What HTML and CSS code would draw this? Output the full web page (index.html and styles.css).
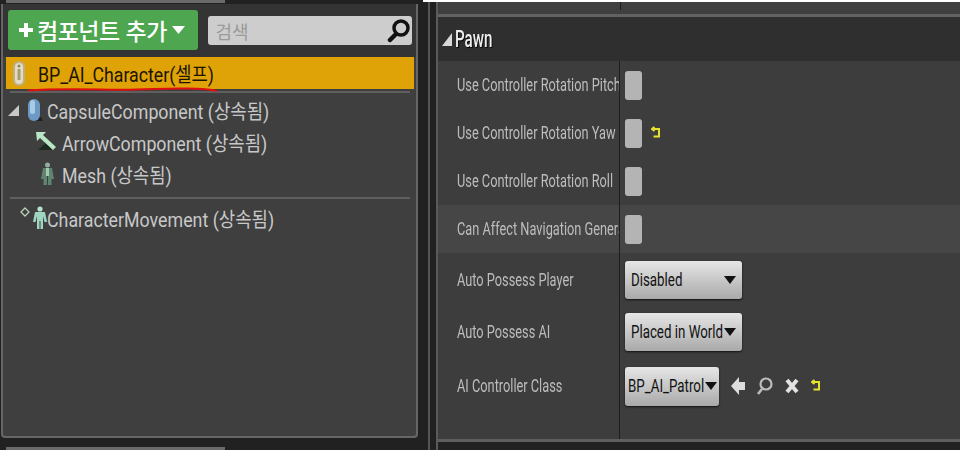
FILE: index.html
```html
<!DOCTYPE html>
<html lang="ko">
<head>
<meta charset="utf-8">
<title>BP_AI_Character</title>
<link rel="stylesheet" href="styles.css">
</head>
<body>
<div class="page">
  <section class="left">
    <div class="tab-strip"><div class="tab"></div></div>
    <div class="panel">
      <div class="toolbar">
        <button class="add">
          <svg class="plus" width="16" height="16" viewBox="0 0 16 16"><path d="M6 1h4v5h5v4h-5v5H6v-5H1V6h5z" fill="#fff"/></svg>
          <span>컴포넌트 추가</span>
          <svg class="caret" width="13" height="8" viewBox="0 0 13 8"><path d="M0 0h13L6.500 8z" fill="#fff"/></svg>
        </button>
        <div class="search">
          <span>검색</span>
          <svg width="24" height="26" viewBox="0 0 24 26"><circle cx="14" cy="10" r="7" fill="none" stroke="#111" stroke-width="3.500"/><path d="M8 17l-5 5" stroke="#111" stroke-width="4.500" stroke-linecap="round"/></svg>
        </div>
      </div>
      <div class="self">
        <svg class="self-icon" width="14" height="27" viewBox="0 0 14 27"><rect x="1" y="1" width="12" height="25" rx="6" fill="#bfae80"/><rect x="3" y="3" width="8" height="21" rx="4" fill="#e2dcc4"/><circle cx="7" cy="6" r="1.500" fill="#8d8468"/><rect x="5.500" y="9" width="3" height="11" fill="#a69a78"/></svg>
        <span class="tx">BP_AI_Character(셀프)</span>
      </div>
      <svg class="redline" width="192" height="6" viewBox="0 0 192 6"><path d="M1 3.500C30 1.500 60 2.500 90 2.800S135 1 160 1.500S182 3 190 3.800" fill="none" stroke="#e01010" stroke-width="2"/></svg>
      <div class="sep first"></div>
      <ul class="tree">
        <li class="node n-capsule">
          <svg width="11" height="11" viewBox="0 0 11 11"><path d="M11 0v11H0z" fill="#c9c9c9"/></svg>
          <svg class="ico-capsule" width="16" height="24" viewBox="0 0 16 24"><path d="M6 23h10l-2-4H6z" fill="#222"/><rect x="1" y="1" width="12" height="22" rx="6" fill="#6d9ac4"/><rect x="3" y="2" width="5" height="14" rx="2.500" fill="#a9cae6"/></svg>
          <span class="tx">CapsuleComponent (상속됨)</span>
        </li>
        <li class="node n-arrow">
          <svg width="22" height="22" viewBox="0 0 22 22"><path d="M3 19h14l-6-7z" fill="#1d2a22"/><path d="M1 1h10L8 4l13 12-3 3L5 7 2 10z" fill="#b9e6c4"/></svg>
          <span class="tx">ArrowComponent (상속됨)</span>
        </li>
        <li class="node n-mesh">
          <svg width="15" height="24" viewBox="0 0 15 24"><circle cx="7.500" cy="3" r="2.500" fill="#8fb09c"/><path d="M3 6h9l2 11h-2.500v6H8V13H7v10H3.500v-6H1z" fill="#5f8570"/><path d="M6 6h3v8H6z" fill="#a9c8b4"/></svg>
          <span class="tx">Mesh (상속됨)</span>
        </li>
      </ul>
      <div class="sep second"></div>
      <div class="node n-move">
        <svg class="diamond" width="10" height="10" viewBox="0 0 10 10"><path d="M5 1l4 4-4 4-4-4z" fill="none" stroke="#b8d0b8" stroke-width="1.300"/></svg>
        <svg class="ico-man" width="14" height="24" viewBox="0 0 14 24"><circle cx="7" cy="3" r="2.600" fill="#b5e3d0"/><path d="M2 6h10l2 10h-2.500L10 10v13H7.500v-8h-1v8H4V10l-1.500 6H0z" fill="#9fd6c0"/></svg>
        <span class="tx">CharacterMovement (상속됨)</span>
      </div>
    </div>
    <div class="tab-strip bottom"><div class="tab"></div></div>
  </section>

  <div class="rule"></div>

  <section class="right">
    <div class="white"></div>
    <div class="prev"><div class="prev-col"></div></div>
    <div class="bar"></div>
    <h2 class="cat">
      <svg width="10" height="13" viewBox="0 0 10 13"><path d="M10 0v13H0z" fill="#d8d8d8"/></svg>
      <span>Pawn</span>
    </h2>
    <div class="props">
      <div class="row r48"><div class="lab"><span>Use Controller Rotation Pitch</span></div><div class="val"><i class="check"></i></div></div>
      <div class="row r48"><div class="lab"><span>Use Controller Rotation Yaw</span></div><div class="val"><i class="check"></i>
        <svg class="reset r1" width="10" height="14" viewBox="0 0 10 14"><path d="M1 3h7v7.500H2.500M3.500 1L1 3l2.500 2" fill="none" stroke="#e4e22c" stroke-width="2"/></svg></div></div>
      <div class="row r48"><div class="lab"><span>Use Controller Rotation Roll</span></div><div class="val"><i class="check"></i></div></div>
      <div class="row r48 hi"><div class="lab"><span>Can Affect Navigation Generation</span></div><div class="val"><i class="check"></i></div></div>
      <div class="row r-a"><div class="lab"><span>Auto Possess Player</span></div><div class="val"><div class="combo wide"><span>Disabled</span><b></b></div></div></div>
      <div class="row r-b"><div class="lab"><span>Auto Possess AI</span></div><div class="val"><div class="combo wide"><span>Placed in World</span><b></b></div></div></div>
      <div class="row r-c"><div class="lab"><span>AI Controller Class</span></div><div class="val"><div class="combo slim"><span>BP_AI_Patrol</span><b></b></div>
        <svg class="tool t-use" width="15" height="20" viewBox="0 0 15 20"><path d="M8 1v5h6v8H8v5L0 10z" fill="#dcdcdc"/></svg>
        <svg class="tool t-find" width="17" height="20" viewBox="0 0 17 20"><circle cx="10" cy="8" r="5.500" fill="none" stroke="#bdbdbd" stroke-width="2.200"/><path d="M6 13l-4 5" stroke="#bdbdbd" stroke-width="2.600"/></svg>
        <svg class="tool t-x" width="14" height="18" viewBox="0 0 14 18"><path d="M2 3l10 12M12 3L2 15" stroke="#e2e2e2" stroke-width="4"/></svg>
        <svg class="reset t-r" width="10" height="14" viewBox="0 0 10 14"><path d="M1 3h7v7.500H2.500M3.500 1L1 3l2.500 2" fill="none" stroke="#e4e22c" stroke-width="2"/></svg>
      </div></div>
      <div class="row filler"><div class="lab"></div><div class="val"></div></div>
    </div>
    <div class="bar end"></div>
  </section>
</div>
</body>
</html>
```

FILE: styles.css
```css
* { box-sizing: border-box; }
html, body { margin: 0; padding: 0; width: 960px; height: 450px; overflow: hidden; background: #212121; }
body { font-family: Roboto, "Noto Sans CJK KR", sans-serif; }
ul { list-style: none; margin: 0; padding: 0; }

.page { display: flex; width: 960px; height: 450px; filter: blur(0.45px); }

/* left: components panel */
.left { width: 428px; flex: none; display: flex; flex-direction: column; padding-right: 10px; }
.tab-strip { height: 4px; flex: none; padding-left: 6px; }
.tab { width: 219px; height: 3px; background: #6a6a6a; }
.tab-strip.bottom { height: 12px; padding-top: 9px; }
.panel { position: relative; height: 434px; flex: none; background: #3f3f3f; border: 2px solid #666; border-top: 0; border-radius: 0 0 4px 4px; margin-left: 1px; }
.toolbar { height: 53px; background: #343434; display: flex; align-items: flex-start; padding: 6px 4px 0 5px; }
.add { width: 190px; height: 40px; border: 0; border-radius: 3px; background: #4ea650; color: #fff; display: flex; align-items: center; padding: 0 0 0 10px; font: 500 23px "Noto Sans CJK KR", sans-serif; }
.add span { margin-left: 3px; white-space: nowrap; letter-spacing: -0.5px; }
.plus { flex: none; }
.caret { flex: none; margin-left: 5px; }
.search { width: 205px; height: 29px; margin: 6px 0 0 10px; background: #cdcdcd; border-radius: 3px; display: flex; align-items: center; justify-content: space-between; padding: 0 1px 0 8px; color: #9a9a9a; font: 18px "Noto Sans CJK KR", sans-serif; }
.self { height: 32px; margin: 0 2px 0 3px; background: #dfa207; display: flex; align-items: center; padding-left: 6px; color: #1a1400; font-size: 20px; }
.self .tx { margin-left: 12px; transform: scaleX(0.885); }
.tx { display: block; transform: scaleX(0.89); transform-origin: left center; white-space: nowrap; }
.redline { position: absolute; left: 24px; top: 83px; }
.sep { height: 2px; background: #5f5f5f; margin: 0 6px 0 7px; }
.sep.first { margin-top: 2px; }
.sep.second { margin-top: 7px; }
.node { display: flex; align-items: center; color: #c8c8c8; font-size: 20px; white-space: nowrap; }
.tree { padding-top: 1px; }
.tree .node { height: 32px; }
.n-capsule { padding-left: 5px; }
.ico-capsule { margin-left: 8px; margin-right: 4px; }
.n-arrow { padding-left: 32px; }
.n-arrow svg { margin-right: 5px; }
.n-mesh { padding-left: 37px; }
.n-mesh svg { margin-right: 7px; }
.n-move { height: 38px; padding-left: 17px; }
.diamond { margin-top: -12px; }
.ico-man { margin-left: 3px; }

.rule { width: 10px; flex: none; border-left: 2px solid #555; }

/* right: details panel */
.right { flex: 1; display: flex; flex-direction: column; border-left: 2px solid #5a5a5a; margin-left: -2px; position: relative; }
.white { position: absolute; left: -15px; right: 0; top: 0; height: 2px; background: #fff; }
.prev { height: 12px; margin-top: 2px; background: #3f3f3f; flex: none; padding-left: 182px; }
.prev-col { width: 1px; height: 8px; background: #1d1d1d; }
.bar { height: 3px; background: #626262; flex: none; }
.cat { margin: 0; height: 44px; flex: none; background: #2f2f2f; display: flex; align-items: center; padding-left: 4px; color: #eee; font-size: 23px; font-weight: 500; text-shadow: 1px 1px 1px #000; }
.cat span { margin-left: 3px; transform: scaleX(0.66); transform-origin: left center; }
.props { height: 378px; flex: none; background: #3d3d3d; display: flex; flex-direction: column; }
.row { display: flex; flex: none; }
.r48 { height: 48px; }
.hi { background: #464646; }
.r-a { height: 53px; }
.r-b { height: 52px; }
.r-c { height: 56px; }
.filler { flex: 1; }
.lab { width: 182px; flex: none; padding-left: 19px; border-right: 1px solid #1d1d1d; color: #bdbdbd; font-size: 17.500px; white-space: nowrap; overflow: hidden; display: flex; align-items: center; }
.lab span { display: block; transform: scaleX(0.73); transform-origin: left center; }
.val { flex: 1; display: flex; align-items: center; padding-left: 5px; }
.check { display: block; width: 17px; height: 29px; border-radius: 3px; background: #b4b4b4; }
.reset { flex: none; }
.r1 { margin-left: 9px; }
.combo { height: 38px; border-radius: 3px; background: linear-gradient(#e6e6e6, #a9a9a9); box-shadow: 0 1px 2px #111; display: flex; align-items: center; color: #111; font-size: 18.500px; white-space: nowrap; }
.combo span { display: block; flex: 1; min-width: 0; transform: scaleX(0.72); transform-origin: left center; }
.combo b { display: block; width: 0; height: 0; border-left: 6.500px solid transparent; border-right: 6.500px solid transparent; border-top: 8px solid #111; flex: none; }
.combo.wide { width: 117px; padding: 0 6px 0 6px; }
.combo.slim { width: 94px; height: 39px; padding: 0 2px 0 3px; }
.tool { flex: none; }
.t-use { margin-left: 12px; }
.t-find { margin-left: 10px; }
.t-x { margin-left: 12px; }
.t-r { margin-left: 12px; }
.bar.end { background: #5e5e5e; }
```
